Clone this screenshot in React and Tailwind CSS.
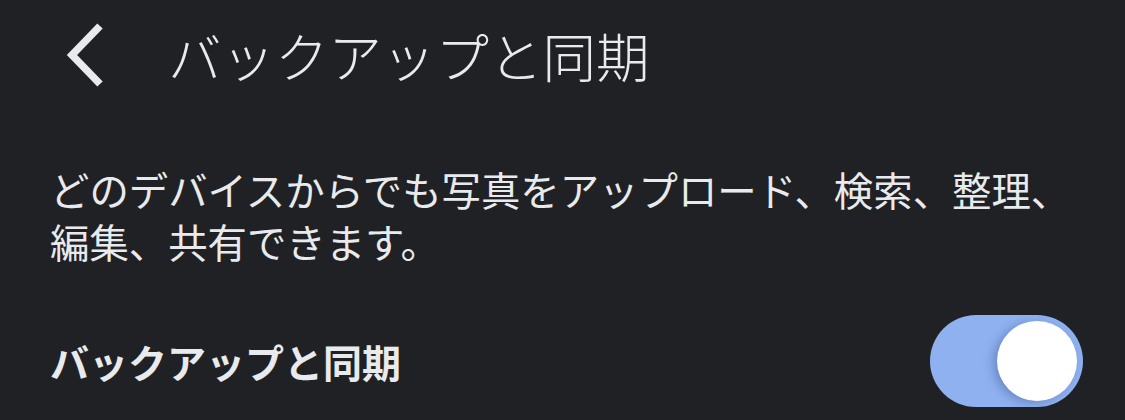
export default function App() {
  return (
    <div
      className="w-[1125px] h-[420px] bg-[#202124] text-[#e8eaed] overflow-hidden"
      style={{ fontFamily: '"Noto Sans CJK JP", "Noto Sans", sans-serif' }}
    >
      <div className="h-[110px] flex items-center pl-[64px]">
        <svg width="44" height="64" viewBox="0 0 44 64" className="shrink-0">
          <path d="M36 3 L8 32 L36 61" fill="none" stroke="#e8eaed" strokeWidth="7.5" strokeLinecap="butt" strokeLinejoin="miter" />
        </svg>
        <h1 className="ml-[60px] text-[53.5px] leading-none font-light">バックアップと同期</h1>
      </div>
      <p className="mt-[53px] pl-[50px] w-[1080px] text-[39.4px] leading-[52px]">
        どのデバイスからでも写真をアップロード、検索、整理、編集、共有できます。
      </p>
      <div className="mt-[48px] pl-[50px] pr-[42px] flex items-center justify-between">
        <span className="text-[39px] font-bold leading-none">バックアップと同期</span>
        <div className="relative w-[153px] h-[92px] rounded-full bg-[#8fb1f0]">
          <div className="absolute right-[6px] top-[6px] w-[80px] h-[80px] rounded-full bg-white shadow-[-4px_2px_10px_rgba(40,60,120,0.35)]" />
        </div>
      </div>
    </div>
  );
}
